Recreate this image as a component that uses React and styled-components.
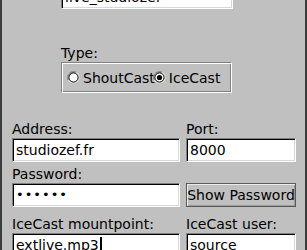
import React from 'react'
import styled, { createGlobalStyle } from 'styled-components'

const GlobalStyle = createGlobalStyle`
  html, body {
    margin: 0;
    padding: 0;
    background: #c0c0c0;
  }
  body {
    font-family: "DejaVu Sans", "Liberation Sans", sans-serif;
    font-size: 14px;
    color: #000;
  }
`

const WindowStyled = styled.div`
  width: 307px;
  height: 250px;
  box-sizing: border-box;
  border-left: 2px solid #3c3c3c;
  border-right: 2px solid #3c3c3c;
  background: #c0c0c0;
  overflow: hidden;
  display: flex;
  flex-direction: column;
`

// sunken text field, fltk style
const FieldStyled = styled.div`
  box-sizing: border-box;
  height: 24px;
  width: ${props => props.width}px;
  background: #fff;
  border-top: 1px solid #808080;
  border-left: 1px solid #808080;
  border-bottom: 1px solid #fff;
  border-right: 1px solid #fff;
  box-shadow: inset 1px 1px 0 #000, inset -1px -1px 0 #d8d8d8;
  padding: 0 3px;
  line-height: 22px;
  white-space: nowrap;
  overflow: hidden;
  display: flex;
  align-items: center;
`

const Caret = styled.span`
  display: inline-block;
  width: 2px;
  height: 16px;
  background: #000;
  margin-left: 1px;
`

const Dots = styled.span`
  letter-spacing: 1px;
  font-size: 13px;
`

const Label = styled.div`
  line-height: 16px;
  height: 16px;
  white-space: nowrap;
`

const TopRow = styled.div`
  margin-top: -15px;
  padding-left: 59px;
  line-height: 22px;
`

const TypeSection = styled.div`
  margin-top: 36px;
  padding-left: 59px;
  display: flex;
  flex-direction: column;
  gap: 1px;
`

const GroupBox = styled.div`
  box-sizing: border-box;
  width: 171px;
  height: 31px;
  border-top: 1px solid #808080;
  border-left: 1px solid #808080;
  border-bottom: 1px solid #fff;
  border-right: 1px solid #fff;
  box-shadow: inset 1px 1px 0 #fff, inset -1px -1px 0 #808080;
  display: flex;
  align-items: center;
  padding-left: 5px;
`

const RadioStyled = styled.label`
  display: flex;
  align-items: center;
  gap: 3px;
  margin-right: ${props => props.tight ? '-2px' : '0'};
  svg {
    flex-shrink: 0;
  }
`

const FormGrid = styled.div`
  display: grid;
  grid-template-columns: 168px 110px;
  column-gap: 6px;
  padding-left: 10px;
  margin-top: ${props => props.top}px;
`

const Cell = styled.div`
  display: flex;
  flex-direction: column;
  gap: 1px;
`

const ButtonStyled = styled.div`
  box-sizing: border-box;
  height: 24px;
  width: 110px;
  background: #c0c0c0;
  border: 1px solid #5a5a5a;
  box-shadow: inset 1px 1px 0 #ececec, inset -1px -1px 0 #9a9a9a;
  display: flex;
  align-items: center;
  justify-content: center;
  white-space: nowrap;
`

function RadioDot({ checked }) {
  return (
    <svg width="13" height="13" viewBox="0 0 13 13">
      <circle cx="6.5" cy="6.5" r="6" fill="#e8e8e8" />
      <path d="M1.2 9 A6 6 0 0 1 9 1.2" stroke="#8c8c8c" strokeWidth="1.4" fill="none" />
      <circle cx="6.5" cy="6.5" r="4.6" fill="#fff" stroke="#000" strokeWidth="1" />
      {checked && <circle cx="6.5" cy="6.5" r="2.6" fill="#000" />}
    </svg>
  )
}

function Radio({ label, checked, tight }) {
  return (
    <RadioStyled tight={tight}>
      <RadioDot checked={checked} />
      {label}
    </RadioStyled>
  )
}

export default function App() {
  return (
    <>
      <GlobalStyle />
      <WindowStyled>
        <TopRow>
          <FieldStyled width={172}>live_studiozef</FieldStyled>
        </TopRow>

        <TypeSection>
          <Label>Type:</Label>
          <GroupBox>
            <Radio label="ShoutCast" tight />
            <Radio label="IceCast" checked />
          </GroupBox>
        </TypeSection>

        <FormGrid top={28}>
          <Cell>
            <Label>Address:</Label>
            <FieldStyled width={168}>studiozef.fr</FieldStyled>
          </Cell>
          <Cell>
            <Label>Port:</Label>
            <FieldStyled width={110}>8000</FieldStyled>
          </Cell>
        </FormGrid>

        <FormGrid top={4}>
          <Cell>
            <Label>Password:</Label>
            <FieldStyled width={168}><Dots>••••••</Dots></FieldStyled>
          </Cell>
          <Cell>
            <Label>&nbsp;</Label>
            <ButtonStyled>Show Password</ButtonStyled>
          </Cell>
        </FormGrid>

        <FormGrid top={9}>
          <Cell>
            <Label>IceCast mountpoint:</Label>
            <FieldStyled width={168}>extlive.mp3<Caret /></FieldStyled>
          </Cell>
          <Cell>
            <Label>IceCast user:</Label>
            <FieldStyled width={110}>source</FieldStyled>
          </Cell>
        </FormGrid>
      </WindowStyled>
    </>
  )
}
